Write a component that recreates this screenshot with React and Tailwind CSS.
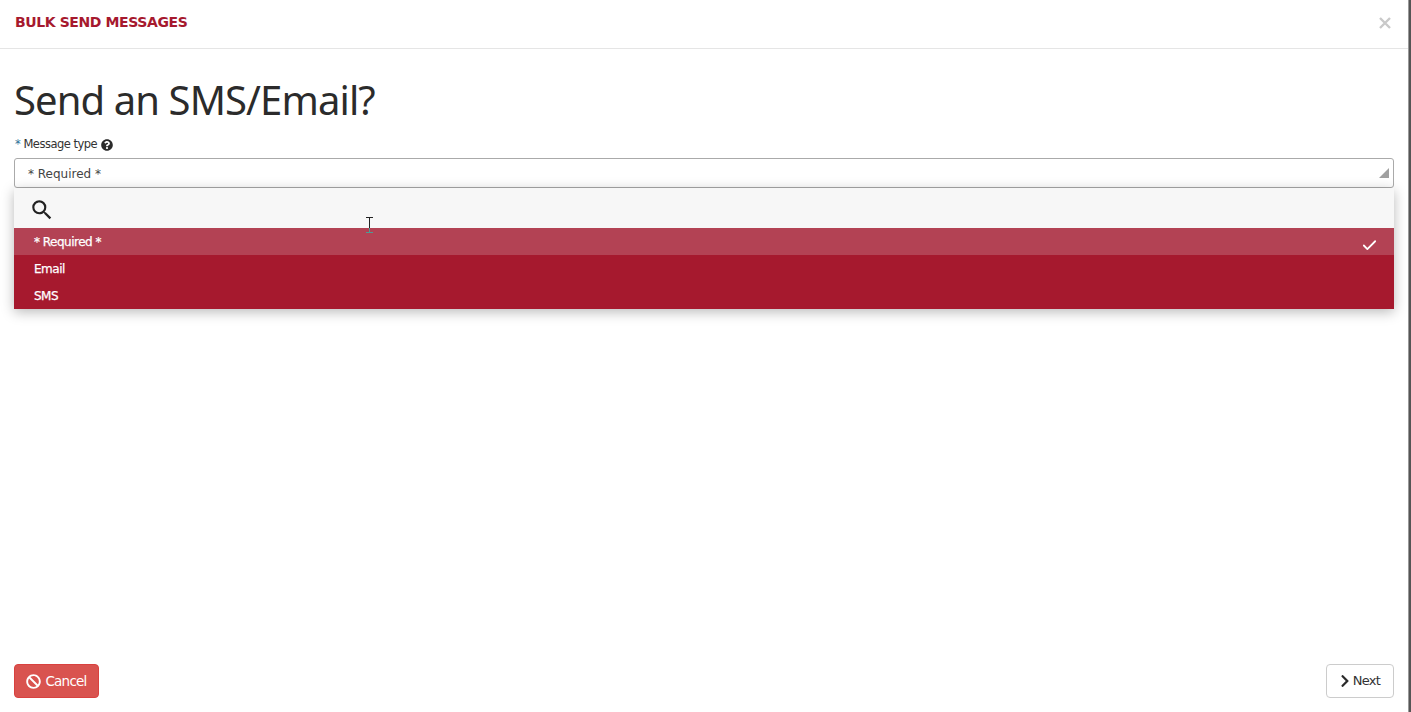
import { Check } from 'lucide-react';
import { FaBan, FaChevronRight, FaQuestionCircle } from 'react-icons/fa';
import { MdSearch } from 'react-icons/md';

const OPTIONS = [
  { label: '* Required *', selected: true },
  { label: 'Email' },
  { label: 'SMS' },
];

export default function App() {
  return (
    <div className="h-[712px] w-full overflow-hidden bg-white font-['Tahoma','DejaVu_Sans',sans-serif] flex">
      <div className="w-[1409px] h-full flex flex-col border-r border-[#9a9a9a]">
        <div className="h-[49px] shrink-0 border-b border-[#e5e5e5] pl-[15px] pr-[17px] pb-[3px] flex items-center justify-between">
          <div className="text-[14px] font-bold tracking-[-0.4px] text-[#a6192e]">BULK SEND MESSAGES</div>
          <svg viewBox="0 0 12 12" className="w-[12px] h-[12px]">
            <path d="M1 1L11 11M11 1L1 11" stroke="#c9c9c9" strokeWidth="2.4" fill="none" />
          </svg>
        </div>

        <div className="flex-1 px-[14px] flex flex-col">
          <h1 className="mt-[24px] h-[54px] leading-[54px] text-[40px] tracking-[-0.9px] font-['Noto_Sans',sans-serif] text-[#2b2b2b]">Send an SMS/Email?</h1>
          <div className="mt-[10px] h-[16px] pl-[1px] flex items-center gap-[4px] text-[11.5px] tracking-[-0.5px] text-[#333333]">
            <span><span className="text-[#2a6f97]">*</span> Message type</span>
            <FaQuestionCircle className="w-[12px] h-[12px] text-[#2b2b2b]" />
          </div>

          <div className="relative mt-[5px]">
            <div className="h-[30px] border border-[#aaaaaa] rounded-[3px] pl-[13px] pr-[5px] pt-[1px] flex items-center justify-between text-[12px] text-[#444444]">
              <span>* Required *</span>
              <svg viewBox="0 0 10 10" className="w-[10px] h-[10px] mt-[-2px] mr-[-1px]">
                <path d="M10 0V10H0Z" fill="#a0a0a0" />
              </svg>
            </div>

            <div className="absolute left-0 right-0 top-[30px] shadow-[0_3px_12px_rgba(0,0,0,0.28)]">
              <div className="h-[40px] bg-[#f7f7f7] pl-[15px] pt-[3px] flex items-center">
                <MdSearch className="w-[26px] h-[26px] text-[#222222]" />
              </div>
              {OPTIONS.map((option) => (
                <div
                  key={option.label}
                  className={`h-[27px] pl-[20px] pr-[16px] flex items-center justify-between text-[12px] tracking-[-0.5px] [-webkit-text-stroke:0.25px_white] text-white ${option.selected ? 'bg-[#b34254]' : 'bg-[#a6192e]'}`}
                >
                  <span>{option.label}</span>
                  {option.selected ? <Check className="w-[17px] h-[17px] mt-[8px]" strokeWidth={2.5} /> : null}
                </div>
              ))}
              <svg viewBox="0 0 9 16" className="absolute left-[351px] top-[29px] w-[9px] h-[16px]">
                <path d="M1 .5h7M1 15.5h7" stroke="#222222" fill="none" />
                <path d="M4.5 .5v11" stroke="#222222" fill="none" />
                <path d="M4.5 11v4.5M1 15.5h7" stroke="#4f9a94" fill="none" />
              </svg>
            </div>
          </div>

          <div className="mt-auto mb-[14px] flex items-center justify-between">
            <button className="h-[34px] w-[85px] rounded-[4px] border border-[#d9413f] bg-[#d9534f] text-white text-[13.5px] tracking-[-0.75px] flex items-center justify-center gap-[4px]">
              <FaBan className="w-[15px] h-[15px]" />
              Cancel
            </button>
            <button className="h-[34px] w-[68px] rounded-[4px] border border-[#cccccc] bg-white text-[#333333] text-[13px] tracking-[-0.7px] flex items-center justify-center gap-[1px] pr-[2px]">
              <FaChevronRight className="w-[14px] h-[14px] text-[#2b2b2b]" />
              Next
            </button>
          </div>
        </div>
      </div>
      <div className="flex-1 bg-[#555555]" />
    </div>
  );
}
